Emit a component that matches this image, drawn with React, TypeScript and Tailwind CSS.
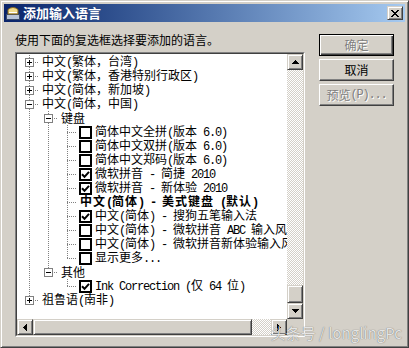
import React from 'react';

type CellSpec = { v?: 'full' | 'top'; h?: boolean; box?: '+' | '-' };
type RowDef = { cells: CellSpec[]; check?: boolean; bold?: boolean; text: string };

const V: CellSpec = { v: 'full' };
const E: CellSpec = {};
const leaf: CellSpec = { v: 'full', h: true };
const lastLeaf: CellSpec = { v: 'top', h: true };

const rows: RowDef[] = [
  { cells: [{ v: 'full', h: true, box: '+' }], text: '中文(繁体，台湾)' },
  { cells: [{ v: 'full', h: true, box: '+' }], text: '中文(繁体，香港特别行政区)' },
  { cells: [{ v: 'full', h: true, box: '+' }], text: '中文(简体，新加坡)' },
  { cells: [{ v: 'full', h: true, box: '-' }], text: '中文(简体，中国)' },
  { cells: [V, { v: 'full', h: true, box: '-' }], text: '键盘' },
  { cells: [V, V, leaf], check: false, text: '简体中文全拼(版本 6.0)' },
  { cells: [V, V, leaf], check: false, text: '简体中文双拼(版本 6.0)' },
  { cells: [V, V, leaf], check: false, text: '简体中文郑码(版本 6.0)' },
  { cells: [V, V, leaf], check: true, text: '微软拼音 - 简捷 2010' },
  { cells: [V, V, leaf], check: true, text: '微软拼音 - 新体验 2010' },
  { cells: [V, V, leaf], bold: true, text: '中文(简体) - 美式键盘 (默认)' },
  { cells: [V, V, leaf], check: true, text: '中文(简体) - 搜狗五笔输入法' },
  { cells: [V, V, leaf], check: false, text: '中文(简体) - 微软拼音 ABC 输入风格' },
  { cells: [V, V, leaf], check: false, text: '中文(简体) - 微软拼音新体验输入风格' },
  { cells: [V, V, lastLeaf], check: false, text: '显示更多...' },
  { cells: [V, { v: 'top', h: true, box: '-' }], text: '其他' },
  { cells: [V, E, lastLeaf], check: true, text: 'Ink Correction (仅 64 位)' },
  { cells: [{ v: 'top', h: true, box: '+' }], text: '祖鲁语(南非)' },
];

const raised =
  'border border-t-[#d4d0c8] border-l-[#d4d0c8] border-r-[#404040] border-b-[#404040] bg-[#d4d0c8] shadow-[inset_1px_1px_#fff,inset_-1px_-1px_#808080]';

// ASCII runs get a half-width mono face, like SimSun
function Txt({ s }: { s: string }) {
  return (
    <>
      {s.split(/([\x20-\x7e]+)/).map((part, i) =>
        /^[\x20-\x7e]+$/.test(part) ? (
          <span key={i} className="whitespace-pre font-['Liberation_Mono',monospace] text-[12px] tracking-[-1.2px]">
            {part}
          </span>
        ) : (
          <React.Fragment key={i}>{part}</React.Fragment>
        )
      )}
    </>
  );
}

function TreeCell({ v, h, box }: CellSpec) {
  return (
    <svg width="19" height="14" className="shrink-0" shapeRendering="crispEdges">
      {v && <line x1="9.5" y1="0" x2="9.5" y2={v === 'full' ? 14 : 8} stroke="#808080" strokeDasharray="1 1" />}
      {h && <line x1="9" y1="7.5" x2="19" y2="7.5" stroke="#808080" strokeDasharray="1 1" />}
      {box && (
        <>
          <rect x="5.5" y="3.5" width="8" height="8" fill="#fff" stroke="#808080" />
          <line x1="7" y1="7.5" x2="12" y2="7.5" stroke="#000" />
          {box === '+' && <line x1="9.5" y1="5" x2="9.5" y2="10" stroke="#000" />}
        </>
      )}
    </svg>
  );
}

function Check({ on }: { on: boolean }) {
  return (
    <span className="ml-[2px] flex h-[13px] w-[13px] shrink-0 items-center justify-center border-2 border-black bg-white">
      {on && (
        <svg width="9" height="9" viewBox="0 0 9 9">
          <path d="M1 4.2 L3.5 6.8 L8 1.8" fill="none" stroke="#000" strokeWidth="2" />
        </svg>
      )}
    </span>
  );
}

function Arrow({ dir }: { dir: 'up' | 'down' | 'left' | 'right' }) {
  const vertical = dir === 'up' || dir === 'down';
  return (
    <svg width={vertical ? 7 : 4} height={vertical ? 4 : 7} shapeRendering="crispEdges">
      {[0, 1, 2, 3].map((i) => {
        if (dir === 'up') return <rect key={i} x={3 - i} y={i} width={2 * i + 1} height="1" fill="#000" />;
        if (dir === 'down') return <rect key={i} x={i} y={i} width={7 - 2 * i} height="1" fill="#000" />;
        if (dir === 'left') return <rect key={i} x={i} y={3 - i} width="1" height={2 * i + 1} fill="#000" />;
        return <rect key={i} x={i} y={i} width="1" height={7 - 2 * i} fill="#000" />;
      })}
    </svg>
  );
}

const track =
  'bg-[image:repeating-conic-gradient(#ffffff_0%_25%,#d4d0c8_0%_50%)] bg-[length:2px_2px]';

export default function App() {
  return (
    <div className="relative h-[348px] w-[409px] border border-t-[#d4d0c8] border-l-[#d4d0c8] border-r-[#404040] border-b-[#404040] bg-[#d4d0c8] p-[3px] font-['Noto_Sans_CJK_SC','Noto_Sans',sans-serif] text-[12px] leading-[14px] text-black shadow-[inset_1px_1px_#fff,inset_-1px_-1px_#808080]">
      {/* title bar */}
      <div className="flex h-[18px] items-center bg-linear-to-r from-[#0a246a] to-[#a6caf0] pl-[1px]">
        <svg width="16" height="16" viewBox="0 0 16 16" className="shrink-0">
          <rect x="1.5" y="9.5" width="13" height="5" fill="#b8c4d8" stroke="#3a4a6a" />
          <path d="M3 4.5 Q8 0.5 13 4.5 L13 9 L3 9 Z" fill="#f2dc8c" stroke="#8a6a20" />
          <path d="M4 7.5 L12 7.5" stroke="#ffffff" />
        </svg>
        <span className="ml-[2px] text-[13px] font-bold leading-[18px] text-white">添加输入语言</span>
        <div className={`ml-auto mr-[2px] flex h-[14px] w-[16px] items-center justify-center ${raised}`}>
          <svg width="8" height="7" viewBox="0 0 8 7" shapeRendering="crispEdges">
            <path d="M0 0h2v1h-2zM6 0h2v1h-2zM1 1h2v1h-2zM5 1h2v1h-2zM2 2h4v1h-4zM3 3h2v1h-2zM2 4h4v1h-4zM1 5h2v1h-2zM5 5h2v1h-2zM0 6h2v1h-2zM6 6h2v1h-2z" fill="#000" />
          </svg>
        </div>
      </div>

      <div className="flex px-[11px] pt-[11px]">
        <div className="w-[290px]">
          <p className="h-[14px]">使用下面的复选框选择要添加的语言。</p>
          <div className="mt-[5px] h-[285px] border border-t-[#808080] border-l-[#808080] border-r-white border-b-white">
            <div className="grid h-full grid-cols-[270px_16px] grid-rows-[265px_16px] border border-t-[#404040] border-l-[#404040] border-r-[#d4d0c8] border-b-[#d4d0c8]">
              <div className="overflow-hidden bg-white pl-[3px] pt-[1px]">
                {rows.map((r, i) => (
                  <div key={i} className="flex h-[14px] items-center whitespace-nowrap">
                    {r.cells.map((c, j) => (
                      <TreeCell key={j} {...c} />
                    ))}
                    {r.check !== undefined && <Check on={r.check} />}
                    <span className={r.bold ? 'ml-[3px] font-bold tracking-[1px]' : 'ml-[3px]'}>
                      <Txt s={r.text} />
                    </span>
                  </div>
                ))}
              </div>

              <div className="flex flex-col">
                <div className={`flex h-[16px] items-center justify-center ${raised}`}>
                  <Arrow dir="up" />
                </div>
                <div className={`flex-1 ${track}`} />
                <div className={`h-[18px] ${raised}`} />
                <div className={`flex h-[16px] items-center justify-center ${raised}`}>
                  <Arrow dir="down" />
                </div>
              </div>

              <div className="flex">
                <div className={`flex w-[16px] items-center justify-center ${raised}`}>
                  <Arrow dir="left" />
                </div>
                <div className={`w-[219px] ${raised}`} />
                <div className={`flex-1 ${track}`} />
                <div className={`flex w-[16px] items-center justify-center ${raised}`}>
                  <Arrow dir="right" />
                </div>
              </div>
              <div className="bg-[#d4d0c8]" />
            </div>
          </div>
        </div>

        <div className="ml-[14px] flex w-[75px] flex-col gap-[3px] pt-[1px]">
          <div className="flex h-[22px] items-center justify-center border border-black bg-[#d4d0c8] text-[#808080] shadow-[inset_1px_1px_#fff,inset_-1px_-1px_#404040,inset_-2px_-2px_#808080] [text-shadow:1px_1px_#fff]">
            确定
          </div>
          <div className="flex h-[22px] items-center justify-center border border-t-white border-l-white border-r-[#404040] border-b-[#404040] bg-[#d4d0c8] shadow-[inset_-1px_-1px_#808080]">
            取消
          </div>
          <div className="flex h-[22px] items-center justify-center border border-t-white border-l-white border-r-[#404040] border-b-[#404040] bg-[#d4d0c8] text-[#808080] shadow-[inset_-1px_-1px_#808080] [text-shadow:1px_1px_#fff]">
            <Txt s="预览(P)..." />
          </div>
        </div>
      </div>

      {/* watermark */}
      <span className="absolute bottom-[5px] right-[6px] text-[15px] leading-[18px] text-[#e4e4e4] [text-shadow:0_0_1px_rgba(0,0,0,0.6)]">
        头条号 / longlingPc
      </span>
    </div>
  );
}
